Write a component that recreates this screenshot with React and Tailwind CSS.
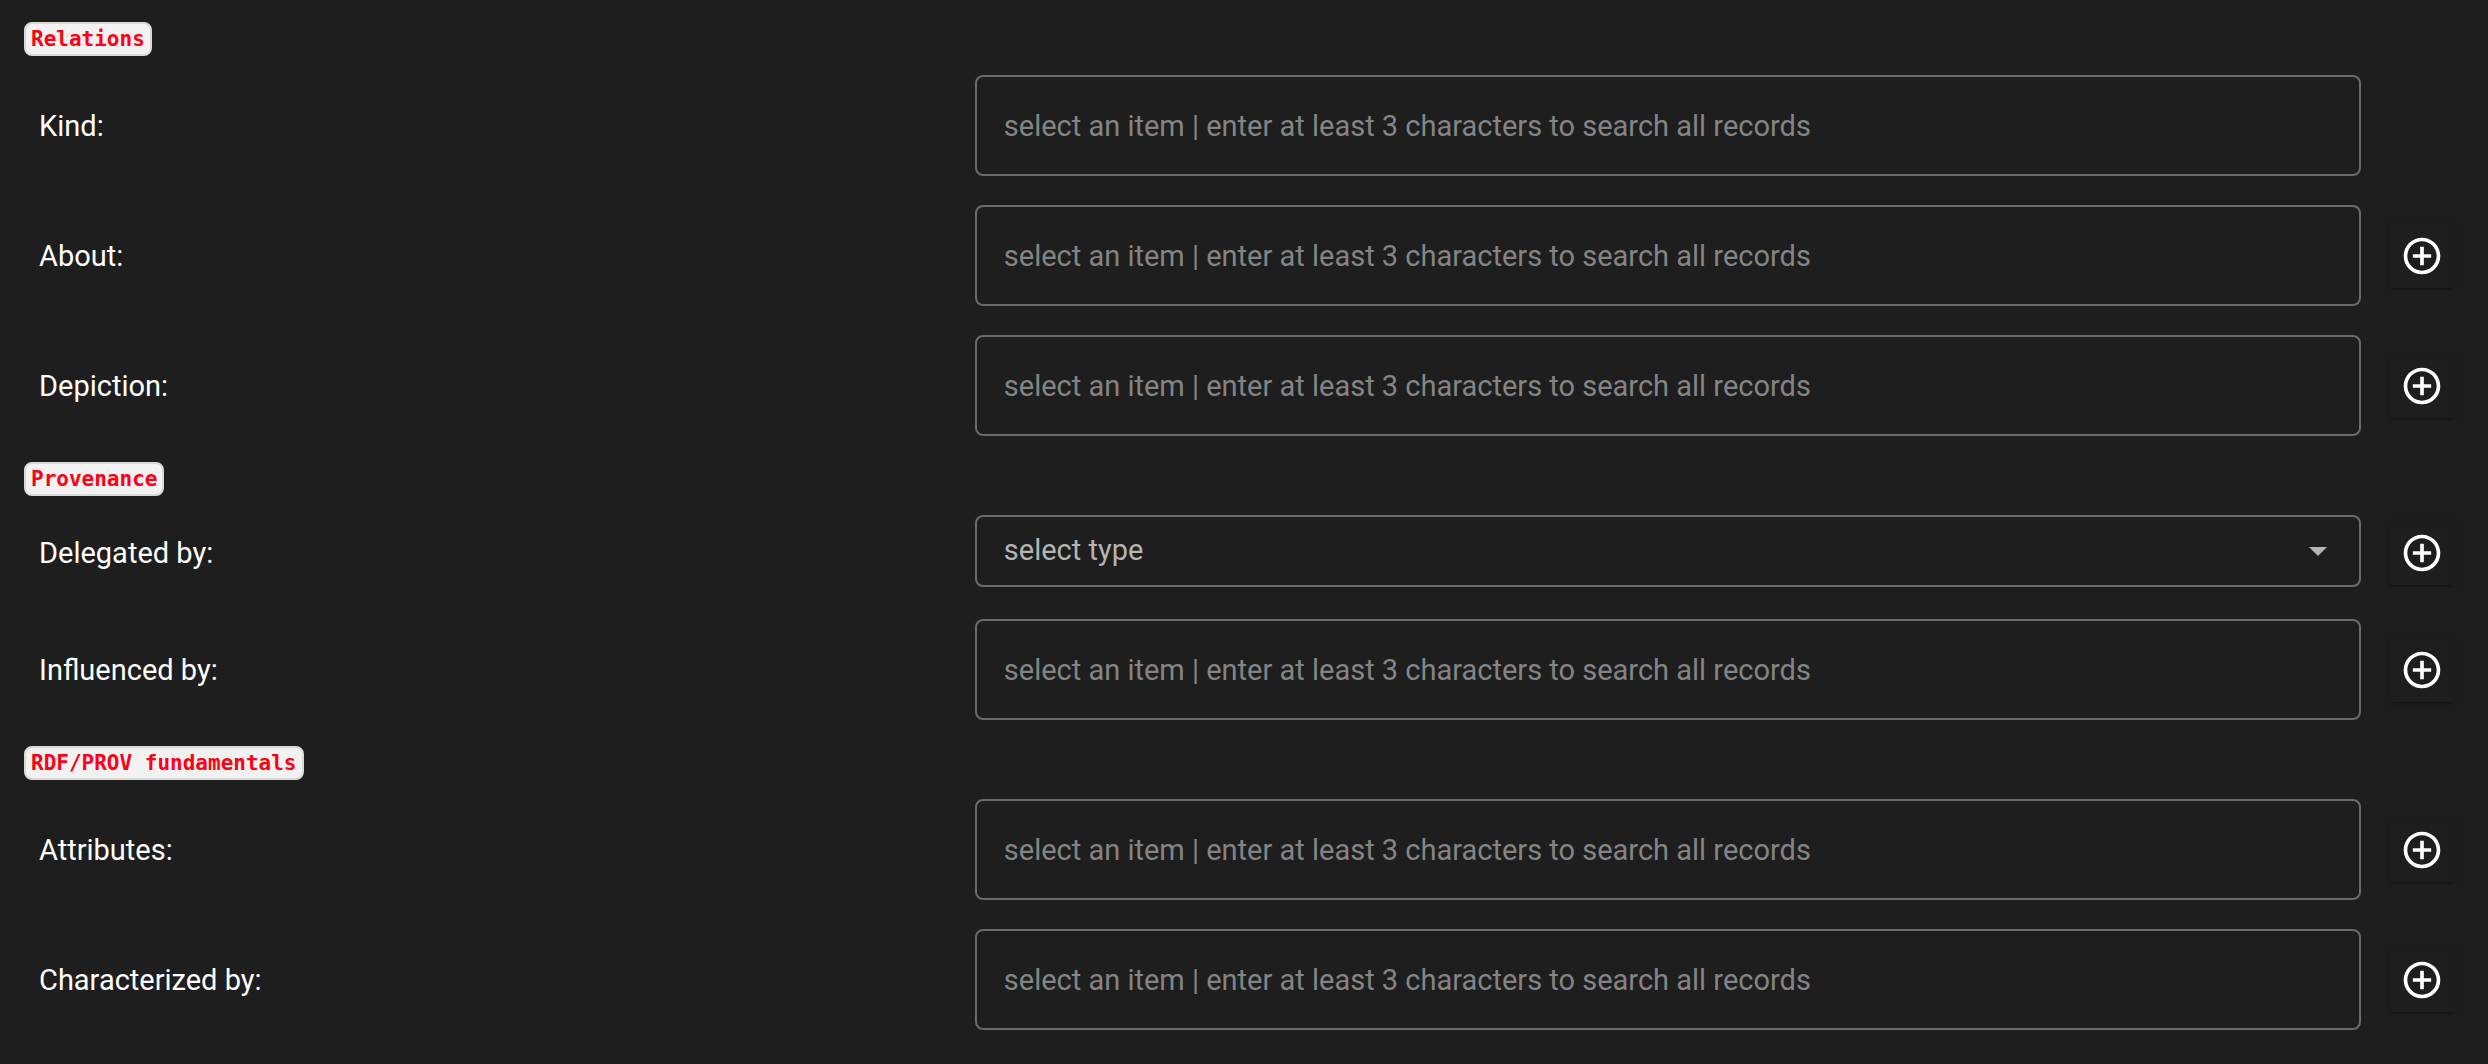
import React from 'react';
import { MdAddCircleOutline } from 'react-icons/md';

const PLACEHOLDER = 'select an item | enter at least 3 characters to search all records';

const sections = [
  {
    title: 'Relations',
    fields: [
      { id: 'kind', label: 'Kind' },
      { id: 'about', label: 'About', repeatable: true },
      { id: 'depiction', label: 'Depiction', repeatable: true },
    ],
  },
  {
    title: 'Provenance',
    fields: [
      { id: 'delegated-by', label: 'Delegated by', type: 'select', repeatable: true },
      { id: 'influenced-by', label: 'Influenced by', repeatable: true },
    ],
  },
  {
    title: 'RDF/PROV fundamentals',
    fields: [
      { id: 'attributes', label: 'Attributes', repeatable: true },
      { id: 'characterized-by', label: 'Characterized by', repeatable: true },
    ],
  },
];

const SearchInput = ({ id }) => (
  <input
    id={id}
    type="text"
    placeholder={PLACEHOLDER}
    className="block w-full h-[101px] px-[27px] rounded-lg border-2 border-[#6b6b6b] bg-transparent text-[29px] text-white placeholder:text-[#848484] outline-none focus:border-white"
  />
);

const TypeSelect = ({ id }) => (
  <div className="relative mb-[3px]">
    <select
      id={id}
      defaultValue=""
      className="block w-full h-[72px] pl-[27px] pr-20 rounded-lg border-2 border-[#6b6b6b] bg-transparent text-[29px] text-[#b4b4b4] appearance-none outline-none focus:border-white"
    >
      <option value="">select type</option>
    </select>
    <svg
      className="absolute right-[34px] top-8 w-[18px] h-[9px] pointer-events-none"
      viewBox="0 0 18 9"
      fill="#b4b4b4"
      aria-hidden="true"
    >
      <path d="M0 0h18L9 9z" />
    </svg>
  </div>
);

const FieldRow = ({ field }) => (
  <div className="flex items-center pb-[29px] last:pb-0">
    <div className="flex flex-1 items-center">
      <label htmlFor={field.id} className="w-2/5 pt-0.5 pl-[15px] text-[29px] text-white">
        {field.label}:
      </label>
      <div className="w-3/5 pl-4">
        {field.type === 'select' ? <TypeSelect id={field.id} /> : <SearchInput id={field.id} />}
      </div>
    </div>
    <div className="w-[94px] pl-7">
      {field.repeatable && (
        <button
          type="button"
          aria-label={`Add ${field.label}`}
          className="flex items-center justify-center w-[66px] h-16 rounded-sm bg-[#1e1e1e] text-white shadow-[0_4px_2px_-3px_rgba(0,0,0,0.3),0_1px_3px_0_rgba(0,0,0,0.1)]"
        >
          <MdAddCircleOutline className="w-11 h-11" />
        </button>
      )}
    </div>
  </div>
);

const App = () => {
  return (
    <div className="min-h-screen bg-[#1e1e1e] pt-[22px] pl-6 pr-[33px] font-['Roboto',sans-serif]">
      <form className="flex flex-col gap-[26px]">
        {sections.map(section => (
          <section key={section.title}>
            <h2 className="flex items-center w-fit h-[34px] mb-[19px] pt-0.5 px-[5px] rounded-lg border-2 border-[#d9d9d9] bg-[#f2f2f2] font-['DejaVu_Sans_Mono',monospace] font-bold text-[21px] text-[#ff0015]">
              {section.title}
            </h2>
            <div>
              {section.fields.map(field => (
                <FieldRow key={field.id} field={field} />
              ))}
            </div>
          </section>
        ))}
      </form>
    </div>
  );
};

export default App;
